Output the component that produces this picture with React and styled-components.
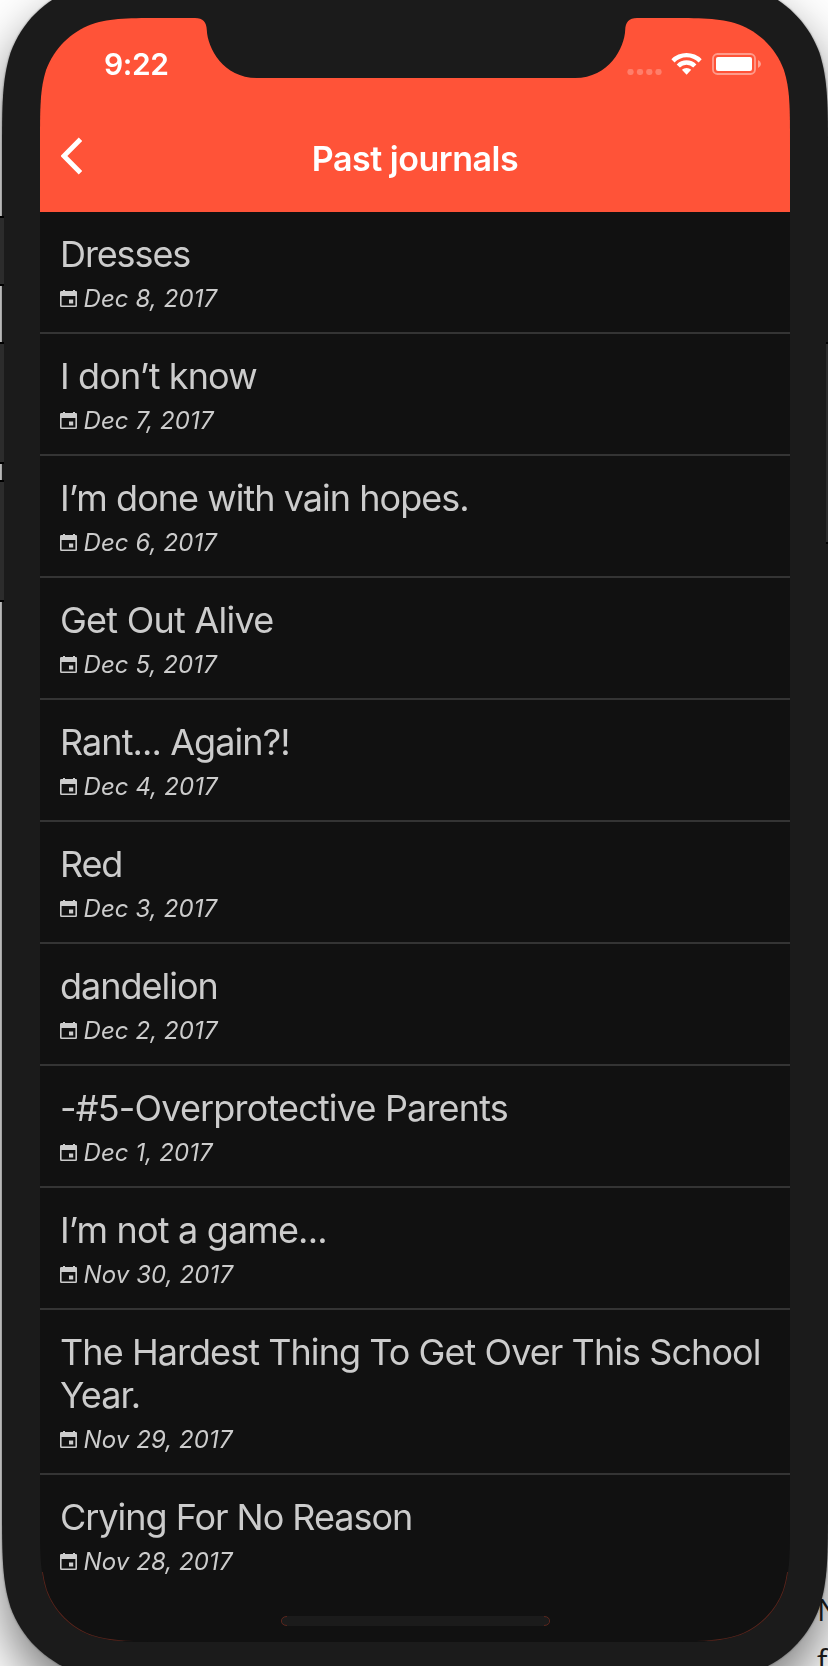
import React from "react";
import styled, { createGlobalStyle } from "styled-components";

const Global = createGlobalStyle`
  * { box-sizing: border-box; }
  html, body { margin: 0; padding: 0; }
  body { width: 828px; height: 1666px; overflow: hidden; background: #fff; }
`;

const round = (n) => Math.round(n * 100) / 100;

const smoothRect = (w, h, r) => {
  const k = [1.52866, 1.08849, 0.86841, 0.63149, 0.37282, 0.16906, 0.07491].map((v) => v * r);
  const corner = (fx, fy) => {
    const p = (x, y) => `${round(fx ? w - x : x)} ${round(fy ? h - y : y)}`;
    return [
      p(0, k[0]), p(0, k[1]), p(0, k[2]), p(k[6], k[3]),
      p(k[5], k[4]), p(k[4], k[5]), p(k[3], k[6]),
      p(k[2], 0), p(k[1], 0), p(k[0], 0),
    ];
  };
  const draw = (c) => `${c[0]} C${c.slice(1, 4).join(" ")} C${c.slice(4, 7).join(" ")} C${c.slice(7).join(" ")}`;
  return `M${draw(corner(0, 0))} L${draw(corner(1, 0).reverse())} L${draw(corner(1, 1))} L${draw(corner(0, 1).reverse())} Z`;
};

const BODY_SHAPE = smoothRect(826, 1700, 115);
const SCREEN_SHAPE = smoothRect(750, 1624, 82);

const Stage = styled.main`
  position: relative;
  width: 828px;
  height: 1666px;
  overflow: hidden;
  font-family: Inter, "Liberation Sans", sans-serif;
`;

const PageText = styled.div`
  position: absolute;
  left: 817px;
  top: 1584px;
  font: 31px/51px "Open Sans", sans-serif;
  color: #1c1c1c;
  white-space: nowrap;
`;

const DeviceShadow = styled.div`
  margin: -20px 0 0 2px;
  width: 826px;
  filter: drop-shadow(0 0 1px rgba(0, 0, 0, 0.4)) drop-shadow(0 26px 26px rgba(0, 0, 0, 0.52));
`;

const Device = styled.div`
  width: 826px;
  height: 1700px;
  padding: 38px;
  background: #1b1b1b;
  clip-path: path("${BODY_SHAPE}");
`;

const SideButton = styled.div`
  position: absolute;
  top: ${(p) => p.$top}px;
  ${(p) => p.$side}: 0;
  width: ${(p) => (p.$side === "left" ? 4 : 2)}px;
  height: ${(p) => p.$height}px;
  background: #2c2c2c;
  border: solid #000;
  border-width: 2px 0;
`;

const Screen = styled.div`
  position: relative;
  display: flex;
  flex-direction: column;
  width: 750px;
  height: 1624px;
  background: #111;
  clip-path: path("${SCREEN_SHAPE}");
`;

const Header = styled.header`
  height: 194px;
  background: #ff5338;
  color: #fff;
`;

const StatusBar = styled.div`
  display: flex;
  justify-content: space-between;
  height: 88px;
  padding: 0 29px 0 64px;
`;

const Clock = styled.div`
  padding-top: 28px;
  font-size: 30px;
  line-height: 36px;
  font-weight: 600;
  letter-spacing: -0.4px;
`;

const StatusIcons = styled.svg`
  display: block;
  width: 134px;
  height: 24px;
  margin-top: 34px;
`;

const Notch = styled.svg`
  position: absolute;
  left: 155px;
  top: 0;
  width: 442px;
  height: 60px;
`;

const NavBar = styled.div`
  display: grid;
  grid-template-columns: 100px 1fr 100px;
  height: 106px;
`;

const BackIcon = styled.svg`
  width: 22px;
  height: 38px;
  margin: 31px 0 0 21px;
`;

const NavTitle = styled.h1`
  margin: 0;
  padding-top: 32px;
  text-align: center;
  font-size: 34px;
  line-height: 41px;
  font-weight: 600;
  letter-spacing: -0.48px;
`;

const List = styled.ul`
  flex: 1;
  margin: 0;
  padding: 0;
  list-style: none;
  color: #ccc;
`;

const Entry = styled.li`
  padding: 21px 20px 10px;
  border-bottom: 2px solid #343434;
  &:last-child { border-bottom: 0; }
`;

const EntryTitle = styled.div`
  font-size: 36px;
  line-height: 43px;
  letter-spacing: ${(p) => p.$track}px;
  white-space: pre;
`;

const EntryDate = styled.div`
  display: flex;
  align-items: center;
  gap: 5.5px;
  height: 46px;
  font-size: 24px;
  line-height: 30px;
  font-style: italic;
  letter-spacing: 0.1px;
`;

const CalendarIcon = styled.svg`
  width: 18px;
  height: 18px;
  flex: none;
`;

const ScreenEdge = styled.svg`
  position: absolute;
  left: 0;
  bottom: 0;
  width: 750px;
  height: 70px;
  pointer-events: none;
`;

const HomeIndicator = styled.div`
  position: absolute;
  left: 241px;
  top: 1598px;
  width: 269px;
  height: 10px;
  border-radius: 5px;
  background: #1b1b1b;
`;

const entries = [
  { title: "Dresses", date: "Dec 8, 2017", track: -1.1 },
  { title: "I don’t know", date: "Dec 7, 2017", track: -0.87 },
  { title: "I’m done with vain hopes.", date: "Dec 6, 2017", track: -0.97 },
  { title: "Get Out Alive", date: "Dec 5, 2017", track: -0.76 },
  { title: "Rant... Again?!", date: "Dec 4, 2017", track: -0.92 },
  { title: "Red", date: "Dec 3, 2017", track: -1.2 },
  { title: "dandelion", date: "Dec 2, 2017", track: -1 },
  { title: "-#5-Overprotective Parents", date: "Dec 1, 2017", track: -0.83 },
  { title: "I’m not a game...", date: "Nov 30, 2017", track: -0.84 },
  { title: "The Hardest Thing To Get Over This School\nYear.", date: "Nov 29, 2017", track: -0.94 },
  { title: "Crying For No Reason", date: "Nov 28, 2017", track: -1.03 },
];

function Status() {
  return (
    <StatusIcons viewBox="0 0 134 24" fill="#fff">
      <g opacity="0.25">
        {[0.4, 9.9, 19.2, 28.4].map((x) => (
          <rect key={x} x={x} y="17" width="6.2" height="6" rx="2.4" />
        ))}
      </g>
      <path d="M44.4 7.3A21.2 21.2 0 0 1 74.7 7.3L71.6 10.4A16.8 16.8 0 0 0 47.5 10.4Z" />
      <path d="M49.7 12.5A13.8 13.8 0 0 1 69.4 12.5L66.2 15.6A9.3 9.3 0 0 0 52.9 15.6Z" />
      <path d="M54.9 17.8A6.6 6.6 0 0 1 64.2 17.8L59.6 22.7Z" />
      <rect x="86" y="2" width="42" height="20" rx="4.5" fill="none" stroke="#fff" strokeWidth="1.8" opacity="0.42" />
      <rect x="89" y="5" width="36" height="14" rx="2" />
      <path d="M131 8Q134 9.5 134 12T131 16Z" opacity="0.45" />
    </StatusIcons>
  );
}

export default function App() {
  return (
    <>
      <Global />
      <Stage>
        <PageText>N<br />f</PageText>
        <DeviceShadow>
          <Device>
            <Screen>
              <Header>
                <StatusBar>
                  <Clock>9:22</Clock>
                  <Status />
                </StatusBar>
                <NavBar>
                  <BackIcon viewBox="0 0 22 38">
                    <path d="M19.5 2.2L2.9 19L19.5 35.8" fill="none" stroke="#fff" strokeWidth="4.9" />
                  </BackIcon>
                  <NavTitle>Past journals</NavTitle>
                </NavBar>
              </Header>
              <List>
                {entries.map((e) => (
                  <Entry key={e.date}>
                    <EntryTitle $track={e.track}>{e.title}</EntryTitle>
                    <EntryDate>
                      <CalendarIcon viewBox="0 0 18 18" fill="#ccc" fillRule="evenodd">
                        <path d="M3 0H5V1H13V0H15V1H16Q17 1 17 2.2V15.5Q17 17 15.7 17H1.5Q0 17 0 15.5V2.2Q0 1 1.3 1H3ZM1.6 6V15.4H15.4V6ZM9 9.5H13.2V13.5H9Z" />
                      </CalendarIcon>
                      {e.date}
                    </EntryDate>
                  </Entry>
                ))}
              </List>
              <Notch viewBox="0 0 442 60" fill="#1b1b1b">
                <path d="M0 0C8 0 11.5 4 11.8 12C12.5 30 28 60 62 60H380C414 60 429.5 30 430.2 12C430.5 4 434 0 442 0Z" />
              </Notch>
              <HomeIndicator />
              <ScreenEdge viewBox="0 1554 750 70" fill="none" stroke="#5a251c">
                <path d={SCREEN_SHAPE} strokeWidth="1.6" />
                <path d="M0 1623.5H110M640 1623.5H750M110 1623.5H640" stroke="#111" />
                <path d="M247 1598.5C239.5 1598.5 239.5 1607.5 247 1607.5M504 1598.5C511.5 1598.5 511.5 1607.5 504 1607.5" />
              </ScreenEdge>
            </Screen>
          </Device>
        </DeviceShadow>
        <SideButton $side="left" $top={216} $height={70} />
        <SideButton $side="left" $top={342} $height={122} />
        <SideButton $side="left" $top={480} $height={122} />
        <SideButton $side="right" $top={342} $height={202} />
      </Stage>
    </>
  );
}
